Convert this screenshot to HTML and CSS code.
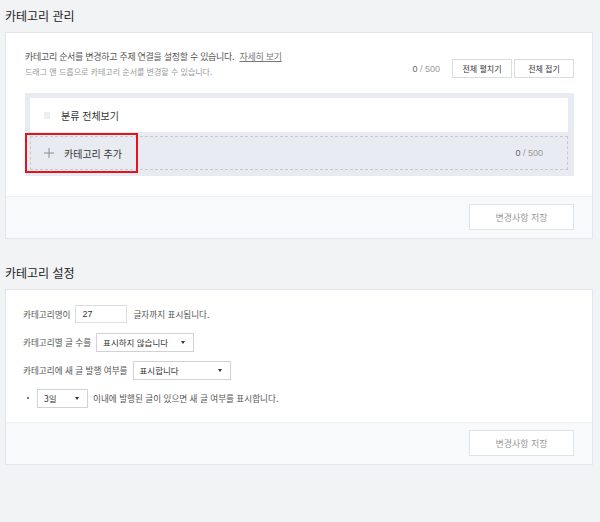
FILE: index.html
```html
<!DOCTYPE html>
<html lang="ko">
<head>
  <meta charset="UTF-8">
  <title>카테고리 관리</title>
  <link rel="stylesheet" href="styles.css">
</head>
<body>
  <h2 class="section-title">카테고리 관리</h2>
  <div class="panel">
    <div class="panel-body">
      <div class="panel-head">
        <div class="desc">
          <p class="desc-main">카테고리 순서를 변경하고 주제 연결을 설정할 수 있습니다. <a href="#" class="more">자세히 보기</a></p>
          <p class="desc-sub">드래그 앤 드롭으로 카테고리 순서를 변경할 수 있습니다.</p>
        </div>
        <div class="head-actions">
          <span class="count"><b>0</b> / 500</span>
          <button class="btn-small">전체 펼치기</button>
          <button class="btn-small">전체 접기</button>
        </div>
      </div>

      <div class="category-box">
        <div class="category-item">
          <span class="handle"></span>
          <span>분류 전체보기</span>
        </div>
        <div class="category-add">
          <svg class="plus" width="10" height="10" viewBox="0 0 10 10">
            <path d="M5 0v10M0 5h10" stroke="#8a8f99" stroke-width="1" fill="none"/>
          </svg>
          <span class="add-label">카테고리 추가</span>
          <span class="count add-count"><b>0</b> / 500</span>
        </div>
        <div class="highlight"></div>
      </div>
    </div>
    <div class="panel-foot">
      <button class="btn-save">변경사항 저장</button>
    </div>
  </div>

  <h2 class="section-title second">카테고리 설정</h2>
  <div class="panel">
    <div class="panel-body settings">
      <div class="row">
        <span>카테고리명이</span>
        <input class="text-input" type="text" value="27">
        <span>글자까지 표시됩니다.</span>
      </div>
      <div class="row">
        <span>카테고리별 글 수를</span>
        <div class="select w98">표시하지 않습니다<i class="arrow"></i></div>
      </div>
      <div class="row">
        <span>카테고리에 새 글 발행 여부를</span>
        <div class="select w98">표시합니다<i class="arrow"></i></div>
      </div>
      <div class="row sub-row">
        <span class="bullet"></span>
        <div class="select w51">3일<i class="arrow"></i></div>
        <span>이내에 발행된 글이 있으면 새 글 여부를 표시합니다.</span>
      </div>
    </div>
    <div class="panel-foot">
      <button class="btn-save">변경사항 저장</button>
    </div>
  </div>
</body>
</html>
```

FILE: styles.css
```css
* {
  margin: 0;
  padding: 0;
  box-sizing: border-box;
}

body {
  width: 600px;
  min-height: 522px;
  padding: 0 7px 0 5px;
  background: #f2f3f5;
  font-family: "Noto Sans CJK KR", "Noto Sans", sans-serif;
  color: #333;
  font-size: 9px;
}

.section-title {
  font-size: 12px;
  font-weight: 400;
  line-height: 32px;
  color: #222;
}

.section-title.second {
  margin-top: 18px;
}

.panel {
  background: #fff;
  border: 1px solid #e3e6ec;
}

.panel-body {
  padding: 16px 18px 20px 19px;
}

.panel-head {
  display: flex;
  justify-content: space-between;
  align-items: flex-end;
  margin-bottom: 14px;
}

.desc p {
  line-height: 15px;
}

.desc-main {
  color: #555;
  letter-spacing: -0.3px;
}

.desc-sub {
  color: #999;
  font-size: 8px;
}

.more {
  color: #777;
  text-decoration: underline;
  margin-left: 3px;
}

.head-actions {
  display: flex;
  align-items: center;
  gap: 2px;
  margin-bottom: 1px;
}

.count {
  color: #999;
  font-family: "Liberation Sans", sans-serif;
  font-size: 9px;
  margin-right: 10px;
}

.count b {
  font-weight: 400;
  color: #666;
}

.btn-small {
  width: 60px;
  height: 19px;
  background: #fff;
  border: 1px solid #d9dce2;
  font-family: inherit;
  font-size: 8px;
  color: #333;
}

.category-box {
  position: relative;
  background: #e8ebf2;
  padding: 5px 6px 6px 5px;
}

.category-item {
  display: flex;
  align-items: center;
  height: 34px;
  background: #fff;
  padding-left: 14px;
  font-size: 10px;
  color: #333;
}

.handle {
  width: 6px;
  height: 7px;
  background: #eceef1;
  margin-right: 11px;
}

.category-add {
  display: flex;
  align-items: center;
  height: 34px;
  margin-top: 4px;
  border: 1px dashed #c5c9d0;
  padding-left: 13px;
  font-size: 10px;
  color: #333;
}

.plus {
  margin-right: 10px;
}

.add-label {
  flex: 1;
}

.add-count {
  margin-right: 24px;
}

.highlight {
  position: absolute;
  left: 0;
  top: 40px;
  width: 113px;
  height: 40px;
  border: 2px solid #e5141c;
}

.panel-foot {
  display: flex;
  justify-content: flex-end;
  background: #f8f9fb;
  border-top: 1px solid #eef0f4;
  padding: 7px 18px 8px;
}

.btn-save {
  width: 105px;
  height: 26px;
  background: #fff;
  border: 1px solid #dfe3ea;
  font-family: inherit;
  font-size: 9px;
  color: #999;
}

.settings {
  padding: 10px 17px 10px 17px;
}

.row {
  display: flex;
  align-items: center;
  height: 28px;
  gap: 5px;
  color: #555;
  font-size: 8.6px;
}

.text-input {
  width: 52px;
  height: 18px;
  border: 1px solid #dadde3;
  padding-left: 6px;
  font-family: "Liberation Sans", sans-serif;
  font-size: 9px;
  color: #333;
  margin-right: 1px;
}

.select {
  position: relative;
  height: 19px;
  border: 1px solid #cfd3d9;
  background: #fff;
  padding-left: 6px;
  line-height: 17px;
  color: #333;
  font-size: 8.5px;
}

.w98 {
  width: 98px;
}

.w51 {
  width: 51px;
}

.arrow {
  position: absolute;
  right: 8px;
  top: 7px;
  border-left: 2.5px solid transparent;
  border-right: 2.5px solid transparent;
  border-top: 3.5px solid #333;
}

.sub-row {
  padding-left: 4px;
}

.bullet {
  width: 2px;
  height: 2px;
  background: #777;
  margin-right: 3px;
}
```
